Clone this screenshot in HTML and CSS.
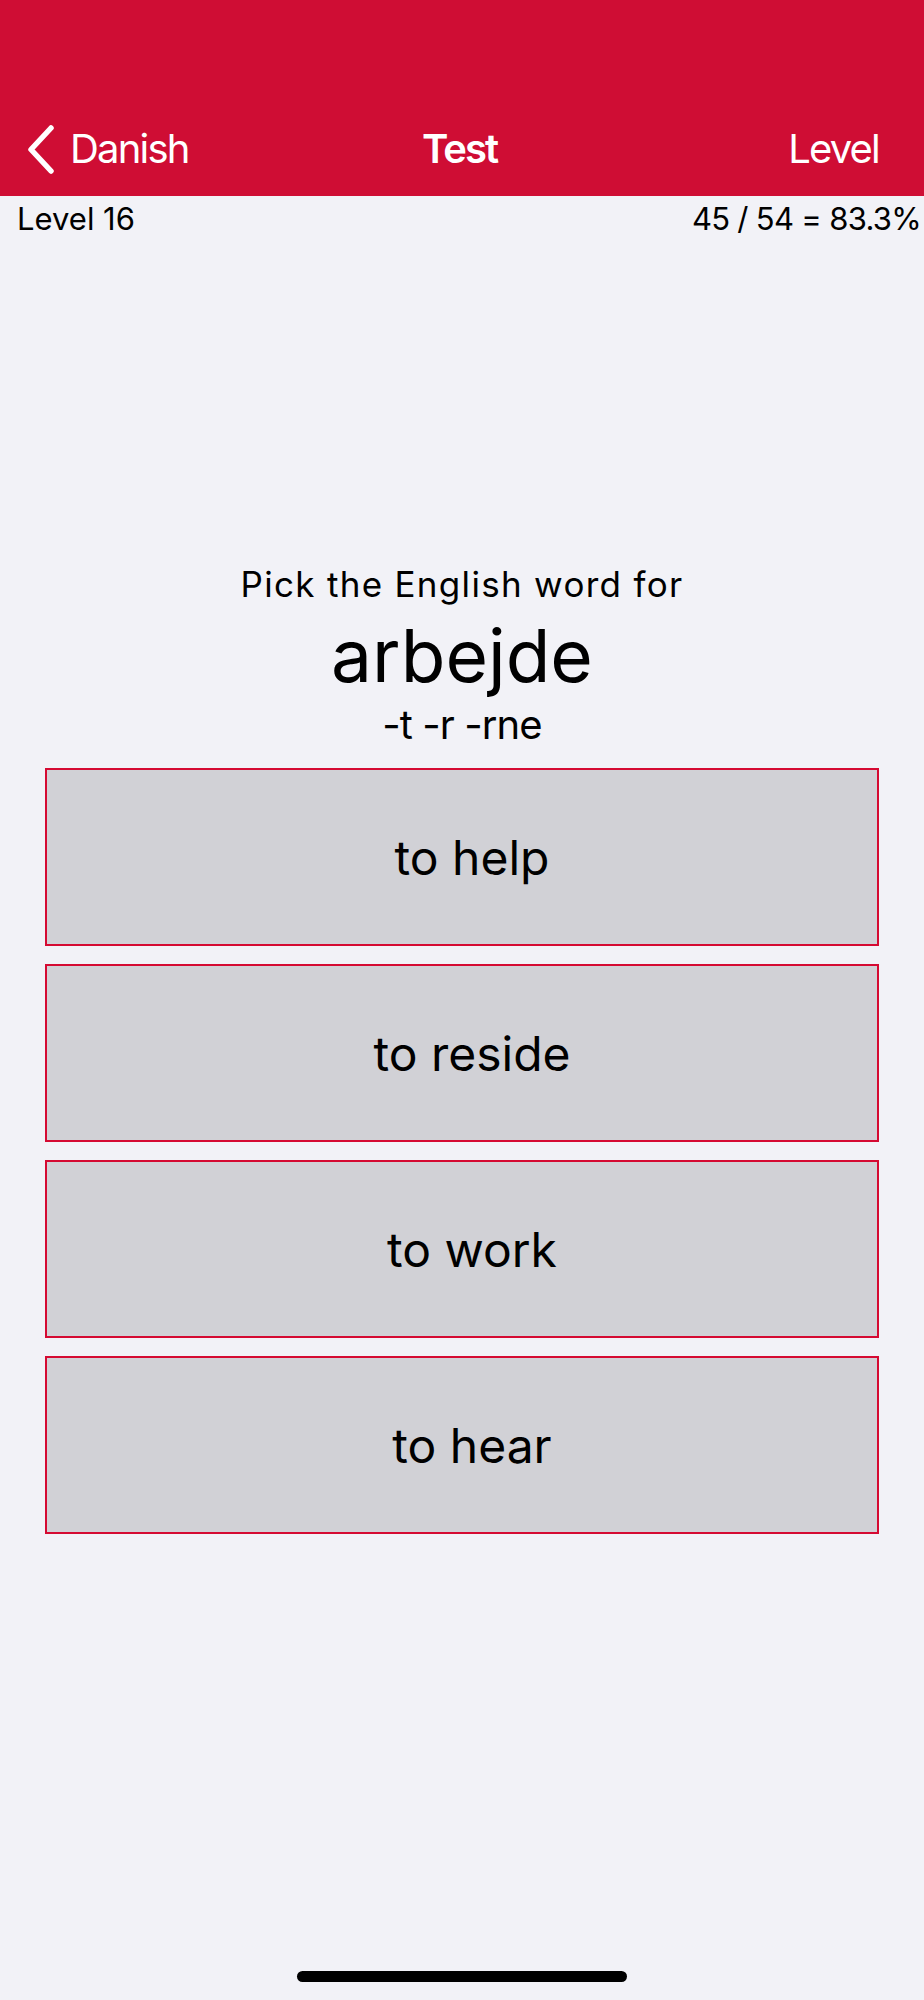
FILE: index.html
```html
<!DOCTYPE html>
<html lang="en">
  <head>
    <meta charset="UTF-8" />
    <meta name="viewport" content="width=device-width, initial-scale=1.0" />
    <title>Test</title>
    <link rel="stylesheet" href="styles.css">
  </head>
  <body>
    <header class="navbar">
      <button class="nav-back">
        <svg class="chevron" viewBox="0 0 30 50" width="30" height="50">
          <path d="M25 3 L5 24.5 L25 46" fill="none" stroke="#fff" stroke-width="5.5" stroke-linecap="round" stroke-linejoin="round" />
        </svg>
        <span>Danish</span>
      </button>
      <h1 class="nav-title">Test</h1>
      <button class="nav-right">Level</button>
    </header>

    <div class="status">
      <span>Level 16</span>
      <span>45 / 54 = 83.3%</span>
    </div>

    <main class="quiz">
      <p class="prompt">Pick the English word for</p>
      <p class="word">arbejde</p>
      <p class="forms">-t -r -rne</p>

      <div class="answers">
        <button class="answer">to help</button>
        <button class="answer">to reside</button>
        <button class="answer">to work</button>
        <button class="answer">to hear</button>
      </div>
    </main>

    <div class="home-indicator"></div>
  </body>
</html>
```

FILE: styles.css
```css
* {
  margin: 0;
  padding: 0;
  box-sizing: border-box;
}

body {
  font-family: Inter, "Noto Sans", sans-serif;
  background-color: #f2f2f7;
  color: #000;
  width: 924px;
  min-height: 2000px;
  position: relative;
  overflow: hidden;
}

.navbar {
  height: 196px;
  background-color: #cf0d34;
  display: grid;
  grid-template-columns: 1fr auto 1fr;
  align-items: end;
  padding: 0 45px 21px 26px;
  color: #fff;
}

.navbar button {
  background: none;
  border: none;
  color: #fff;
  font-family: inherit;
  font-size: 40px;
  line-height: 52px;
  letter-spacing: -1.8px;
}

.nav-back {
  display: flex;
  align-items: center;
  gap: 14px;
  justify-self: start;
}

.chevron {
  display: block;
  margin-top: 2px;
}

.nav-title {
  font-size: 40px;
  font-weight: 600;
  line-height: 52px;
  letter-spacing: -2px;
  padding-left: 14px;
}

.nav-right {
  justify-self: end;
}

.status {
  display: flex;
  justify-content: space-between;
  padding: 4px 3px 0 17px;
  font-size: 31px;
  line-height: 38px;
}

.status span:last-child {
  letter-spacing: -0.7px;
}

.quiz {
  padding-top: 325px;
  text-align: center;
}

.prompt {
  font-size: 35px;
  line-height: 42px;
  letter-spacing: 1.3px;
}

.word {
  margin-top: 11px;
  font-size: 73px;
  line-height: 80px;
}

.forms {
  margin-top: 4px;
  font-size: 40px;
  line-height: 50px;
  letter-spacing: -0.9px;
}

.answers {
  margin: 18px 45px 0;
  display: flex;
  flex-direction: column;
  gap: 18px;
}

.answer {
  height: 178px;
  background-color: #d1d1d6;
  border: 2px solid #d50a32;
  font-family: inherit;
  font-size: 48px;
  color: #000;
  padding-left: 20px;
}

.home-indicator {
  position: absolute;
  left: 297px;
  bottom: 18px;
  width: 330px;
  height: 11px;
  border-radius: 6px;
  background-color: #000;
}
```
